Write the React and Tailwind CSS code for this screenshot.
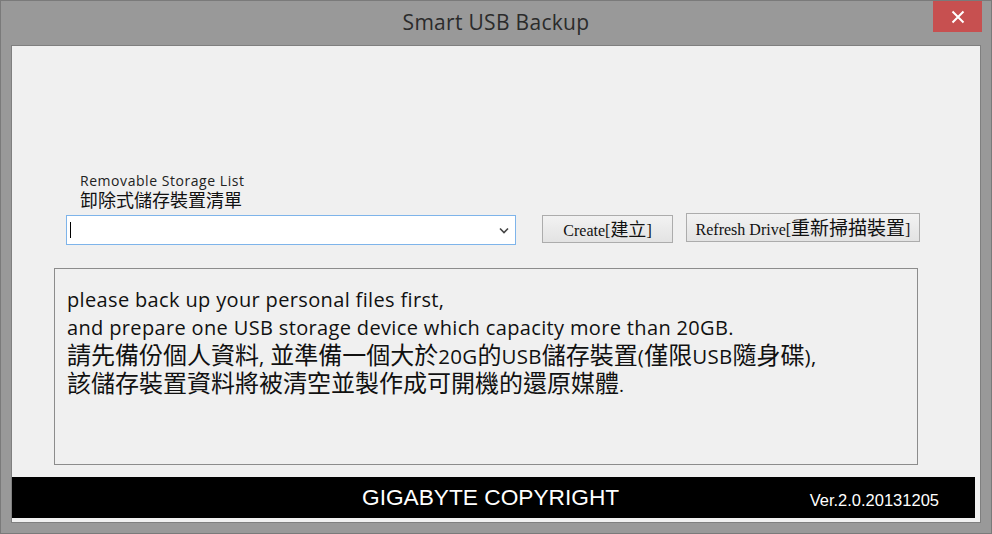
import React from 'react';

const sans = "font-['Segoe_UI','Open_Sans','Noto_Sans_CJK_TC',sans-serif]";
const cjk = "font-['Noto_Sans_CJK_TC',sans-serif]";
const serif = "font-['Liberation_Serif','Noto_Sans_CJK_TC',serif]";

function Zh({ children, size = 'text-[24px]' }) {
  return <span className={`${cjk} ${size} leading-none tracking-normal`}>{children}</span>;
}

export default function App() {
  return (
    <div className="w-[992px] h-[534px] bg-[#999999] border border-[#7a7a7a] flex flex-col">
      <div className="relative h-[44px] flex items-center justify-center">
        <span className={`${sans} text-[21px] text-[#2b2b2b] tracking-[0.3px] -mt-[1px]`}>Smart USB Backup</span>
        <button className="absolute right-[9px] top-0 w-[49px] h-[31px] bg-[#c75050] flex items-center justify-center">
          <svg width="14" height="14" viewBox="0 0 14 14">
            <path d="M1.5 1.5 L12.5 12.5 M12.5 1.5 L1.5 12.5" stroke="#fff" strokeWidth="2" />
          </svg>
        </button>
      </div>

      <div className="ml-[10px] w-[970px] h-[478px] bg-[#f0f0f0] border border-[#7f7f7f] flex flex-col">
        <div className="ml-[68px] mt-[127px] flex flex-col">
          <span className={`${sans} text-[14px] leading-[16px] tracking-[0.55px] text-[#222]`}>Removable Storage List</span>
          <span className={`${cjk} text-[18px] leading-[20px] text-[#111]`}>卸除式儲存裝置清單</span>
        </div>

        <div className="flex items-start mt-[6px] ml-[54px]">
          <div className="w-[450px] h-[30px] bg-white border border-[#7eb4ea] flex items-center justify-between px-[3px]">
            <span className="w-[1px] h-[16px] bg-black" />
            <svg width="10" height="7" viewBox="0 0 10 7" className="mr-[3px]">
              <path d="M1 1.5 L5 5.5 L9 1.5" stroke="#444" strokeWidth="1.6" fill="none" />
            </svg>
          </div>
          <button className={`ml-[26px] w-[131px] h-[28px] bg-gradient-to-b from-[#f2f2f2] to-[#e3e3e3] border border-[#acacac] ${serif} text-[16px] text-[#111] leading-none`}>
            Create[<Zh size="text-[18px]">建立</Zh>]
          </button>
          <button className={`ml-[13px] -mt-[2px] w-[234px] h-[29px] bg-gradient-to-b from-[#f2f2f2] to-[#e3e3e3] border border-[#acacac] ${serif} text-[16px] text-[#111] leading-none`}>
            Refresh Drive[<Zh size="text-[19px]">重新掃描裝置</Zh>]
          </button>
        </div>

        <div className={`ml-[42px] mt-[23px] w-[864px] h-[197px] border border-[#8c8c8c] pl-[12px] pt-[17px] ${sans} text-[#111] leading-[28px]`}>
          <p className="h-[28px] text-[20px] tracking-[0.35px]">please back up your personal files first,</p>
          <p className="h-[28px] text-[20px] tracking-[0.35px]">and prepare one USB storage device which capacity more than 20GB.</p>
          <p className="h-[28px] text-[20.5px] tracking-[0.3px]">
            <Zh>請先備份個人資料</Zh>, <Zh>並準備一個大於</Zh>20G<Zh>的</Zh>USB<Zh>儲存裝置</Zh>(<Zh>僅限</Zh>USB<Zh>隨身碟</Zh>),
          </p>
          <p className="h-[28px] text-[19px]">
            <Zh>該儲存裝置資料將被清空並製作成可開機的還原媒體</Zh>.
          </p>
        </div>

        <div className="mt-[12px] w-[963px] h-[41px] bg-black flex items-center font-['Liberation_Sans',sans-serif] text-white">
          <span className="ml-[350px] text-[22.7px]">GIGABYTE COPYRIGHT</span>
          <span className="ml-auto mr-[36px] text-[16.5px] mt-[6px]">Ver.2.0.20131205</span>
        </div>
      </div>
    </div>
  );
}
